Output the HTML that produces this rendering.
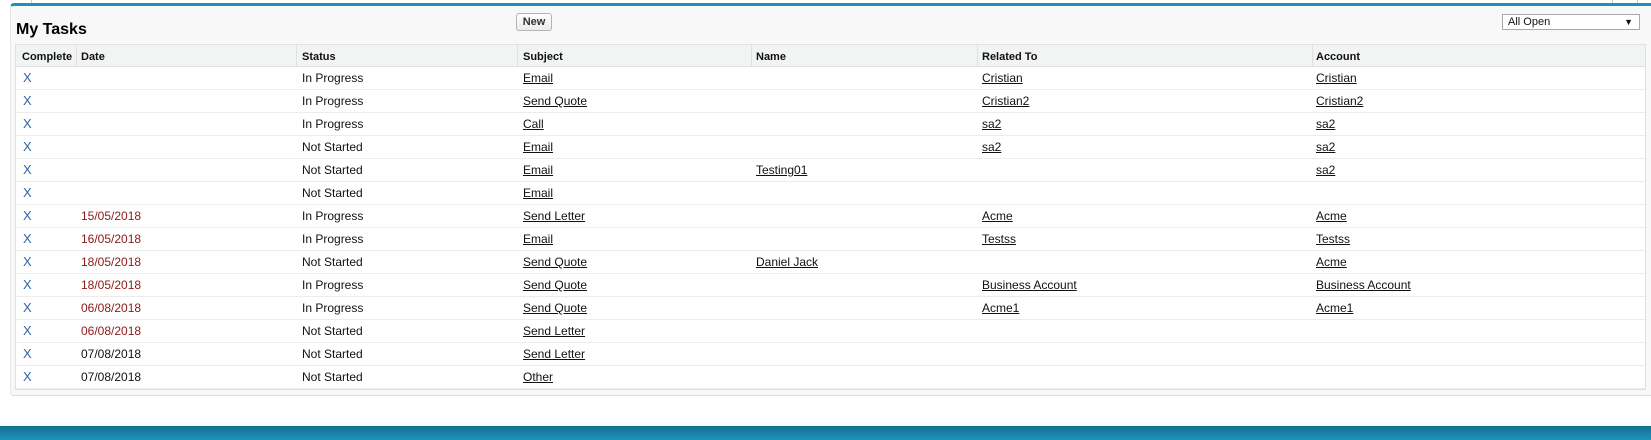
<!DOCTYPE html>
<html><head><meta charset="utf-8"><style>
*{margin:0;padding:0;box-sizing:border-box}
body{width:1651px;height:440px;background:#fff;font-family:"Liberation Sans",Arial,sans-serif;position:relative;overflow:hidden;color:#111}
.panel{position:absolute;left:10px;top:3px;width:1641px;height:393px;background:#f8f8f8;border-top:3px solid #1f8fb5;border-radius:4px 0 0 4px;border-left:1px solid #e6e6e6;border-bottom:1px solid #dcdcdc}
.title{position:absolute;left:16px;top:21px;font-size:16px;font-weight:bold;color:#000}
.new{position:absolute;left:516px;top:13px;width:36px;height:18px;border:1px solid #b5b5b5;border-radius:3px;background:linear-gradient(#fff,#ececec);font-size:11px;font-weight:bold;color:#333;text-align:center;line-height:16px}
.sel{position:absolute;left:1502px;top:14px;width:138px;height:16px;border:1px solid #a9a9a9;background:#fff;font-size:11px;line-height:14px;padding-left:5px}
.sel span{position:absolute;right:6px;top:0;font-size:9px}
.tbl{position:absolute;left:15px;top:44px;width:1631px;height:346px;background:#fff;border:1px solid #e0e0e0}
.hdr{position:absolute;left:0;top:0;width:100%;height:22px;background:#f2f3f3;border-bottom:1px solid #e0e0e0;font-size:11px;font-weight:bold}
.row{position:absolute;left:0;width:100%;height:23px;border-bottom:1px solid #ececec;font-size:12px}
.c{position:absolute;top:0;line-height:22px;white-space:nowrap}
.hdr .c{line-height:24px}
.d{position:absolute;top:0;height:22px;width:1px;background:#e0e0e0}
u{color:#111}
.x{color:#2f66a8;font-size:13px}
.r{color:#8b1a1a}
.band{position:absolute;left:0;top:426px;width:1651px;height:14px;background:linear-gradient(#16708f,#1a93bd)}
</style></head><body>
<div style="position:absolute;left:31px;top:0;width:1px;height:4px;background:#ccc"></div>
<div style="position:absolute;left:1612px;top:0;width:1px;height:4px;background:#ccc"></div>
<div style="position:absolute;left:1637px;top:0;width:1px;height:4px;background:#ccc"></div>
<div class="panel"></div>
<div class="title">My Tasks</div>
<div class="new">New</div>
<div class="sel">All Open<span>▼</span></div>
<div class="tbl">
<div class="hdr">
<div class="c" style="left:6px">Complete</div>
<div class="d" style="left:60px"></div><div class="c" style="left:65px">Date</div>
<div class="d" style="left:280px"></div><div class="c" style="left:286px">Status</div>
<div class="d" style="left:501px"></div><div class="c" style="left:507px">Subject</div>
<div class="d" style="left:735px"></div><div class="c" style="left:740px">Name</div>
<div class="d" style="left:961px"></div><div class="c" style="left:966px">Related To</div>
<div class="d" style="left:1296px"></div><div class="c" style="left:1300px">Account</div>
</div>
<div id="rows"></div>
</div>
<div class="band"></div>
<script>
var d=[["","In Progress","Email","","Cristian","Cristian",0],
["","In Progress","Send Quote","","Cristian2","Cristian2",0],
["","In Progress","Call","","sa2","sa2",0],
["","Not Started","Email","","sa2","sa2",0],
["","Not Started","Email","Testing01","","sa2",0],
["","Not Started","Email","","","",0],
["15/05/2018","In Progress","Send Letter","","Acme","Acme",1],
["16/05/2018","In Progress","Email","","Testss","Testss",1],
["18/05/2018","Not Started","Send Quote","Daniel Jack","","Acme",1],
["18/05/2018","In Progress","Send Quote","","Business Account","Business Account",1],
["06/08/2018","In Progress","Send Quote","","Acme1","Acme1",1],
["06/08/2018","Not Started","Send Letter","","","",1],
["07/08/2018","Not Started","Send Letter","","","",0],
["07/08/2018","Not Started","Other","","","",0]];
var h="";
d.forEach(function(r,i){
h+='<div class="row" style="top:'+(22+i*23)+'px">'+
'<div class="c x" style="left:7px">X</div>'+
'<div class="c'+(r[6]?' r':'')+'" style="left:65px">'+r[0]+'</div>'+
'<div class="c" style="left:286px">'+r[1]+'</div>'+
'<div class="c" style="left:507px"><u>'+r[2]+'</u></div>'+
'<div class="c" style="left:740px"><u>'+r[3]+'</u></div>'+
'<div class="c" style="left:966px"><u>'+r[4]+'</u></div>'+
'<div class="c" style="left:1300px"><u>'+r[5]+'</u></div></div>';
});
document.getElementById("rows").innerHTML=h;
</script>
</body></html>
